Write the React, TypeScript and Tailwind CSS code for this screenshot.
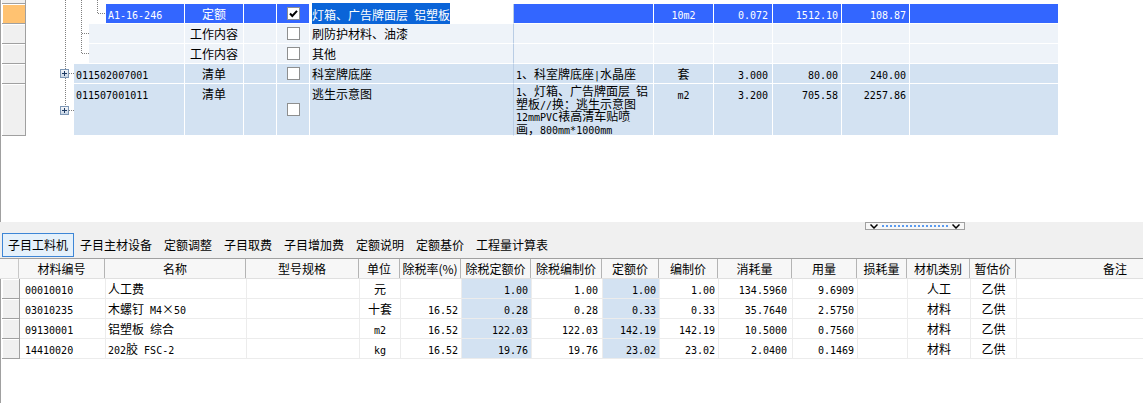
import React from "react";

const cjk = "font-['Noto_Sans_CJK_SC',sans-serif] text-[12px]";
const asc = "font-['DejaVu_Sans_Mono',monospace] text-[10px]";
const CJK_RE = /([\u2E80-\u9FFF\u3000-\u303F\uFF00-\uFFEF×]+)/;

// SimSun-ish look: CJK at 12px, ascii as narrow mono
function Mixed({ s }: { s: string }) {
  const parts = s.split(CJK_RE).filter(Boolean);
  return (
    <>
      {parts.map((p, i) =>
        CJK_RE.test(p) ? (
          <span key={i} className={cjk}>
            {p}
          </span>
        ) : (
          <span key={i} className={asc}>
            {p}
          </span>
        )
      )}
    </>
  );
}

function Checkbox({ checked }: { checked?: boolean }) {
  return (
    <svg width="13" height="13" viewBox="0 0 13 13">
      <rect x="0.5" y="0.5" width="12" height="12" fill="#fff" stroke="#8e8f8f" />
      {checked && <path d="M3 6.5 L5.3 9 L10 3.8" fill="none" stroke="#000" strokeWidth="2" />}
    </svg>
  );
}

type TopRow = {
  indent: number;
  code: string;
  type: string;
  checked?: boolean;
  name: string;
  feat: string[];
  unit: string;
  qty: string;
  price: string;
  total: string;
  kind: "sel" | "sub" | "list";
  tall?: boolean;
};

const topRows: TopRow[] = [
  { indent: 80, code: "A1-16-246", type: "定额", checked: true, name: "灯箱、广告牌面层 铝塑板", feat: [], unit: "10m2", qty: "0.072", price: "1512.10", total: "108.87", kind: "sel" },
  { indent: 63, code: "", type: "工作内容", name: "刷防护材料、油漆", feat: [], unit: "", qty: "", price: "", total: "", kind: "sub" },
  { indent: 63, code: "", type: "工作内容", name: "其他", feat: [], unit: "", qty: "", price: "", total: "", kind: "sub" },
  { indent: 48, code: "011502007001", type: "清单", name: "科室牌底座", feat: ["1、科室牌底座|水晶座"], unit: "套", qty: "3.000", price: "80.00", total: "240.00", kind: "list" },
  {
    indent: 48,
    code: "011507001011",
    type: "清单",
    name: "逃生示意图",
    feat: ["1、灯箱、广告牌面层 铝", "塑板//换：逃生示意图", "12mmPVC裱高清车贴喷", "画，800mm*1000mm"],
    unit: "m2",
    qty: "3.200",
    price: "705.58",
    total: "2257.86",
    kind: "list",
    tall: true,
  },
];

const bg = { sel: "bg-[#3366ff] text-white", sub: "bg-[#eef3f9] text-black", list: "bg-[#d3e2f2] text-black" };

function TopGridRow({ r, first }: { r: TopRow; first?: boolean }) {
  const c = `${bg[r.kind]} border-r border-b border-white leading-[19px] whitespace-nowrap overflow-hidden`;
  return (
    <div className={r.tall ? "flex h-[52px]" : "flex h-[20px]"}>
      <div
        className={`w-[24px] shrink-0 border-r border-b border-[#a0a0a0] shadow-[inset_1px_1px_0_#fff] ${
          first ? "bg-[#ffc271]" : "bg-[#f0f0f0]"
        }`}
      />
      <div className="shrink-0 bg-white" style={{ width: r.indent }} />
      <div className={`${c} shrink-0 pl-[2px]`} style={{ width: 159 - r.indent }}>
        <Mixed s={r.code} />
      </div>
      <div className={`${c} w-[59px] shrink-0 text-center`}>
        <Mixed s={r.type} />
      </div>
      <div className={`${c} w-[33px] shrink-0`} />
      <div className={`${bg[r.kind]} w-[33px] shrink-0 border-r border-b border-white flex items-center justify-center`}>
        <Checkbox checked={r.checked} />
      </div>
      {r.kind === "sel" ? (
        <div className="w-[204px] shrink-0 bg-white border-r border-b border-r-[#b9cde5] border-b-white pl-[2px] pt-[2px] leading-[16px] whitespace-nowrap">
          <span className="bg-[#0a64d8] text-white">
            <Mixed s={r.name} />
          </span>
        </div>
      ) : (
        <div className={`${bg[r.kind]} w-[204px] shrink-0 border-r border-b border-r-[#b9cde5] border-b-white pl-[2px] leading-[19px] whitespace-nowrap`}>
          <Mixed s={r.name} />
        </div>
      )}
      <div className={`${bg[r.kind]} w-[140px] shrink-0 border-r border-b border-white pl-[2px] whitespace-nowrap`}>
        {r.feat.map((l) => (
          <div key={l} className={r.tall ? "h-[12.5px] leading-[13px]" : "h-[19px] leading-[19px]"}>
            <Mixed s={l} />
          </div>
        ))}
      </div>
      <div className={`${c} w-[60px] shrink-0 text-center`}>
        <Mixed s={r.unit} />
      </div>
      <div className={`${c} w-[59px] shrink-0 text-right pr-[4px]`}>
        <Mixed s={r.qty} />
      </div>
      <div className={`${c} w-[69px] shrink-0 text-right pr-[3px]`}>
        <Mixed s={r.price} />
      </div>
      <div className={`${c} w-[68px] shrink-0 text-right pr-[3px]`}>
        <Mixed s={r.total} />
      </div>
      <div className={`${c} w-[149px] shrink-0`} />
    </div>
  );
}

function TreeLines() {
  const dot = { stroke: "#7f7f7f", strokeDasharray: "1 1", strokeWidth: 1 };
  const plus = (y: number) => (
    <g key={y}>
      <rect x="60.5" y={y + 0.5} width="8" height="8" fill="url(#pg)" stroke="#7d97b5" />
      <path d={`M62 ${y + 4.5} H67 M64.5 ${y + 2} V${y + 7}`} stroke="#1d3a63" strokeWidth="1" />
    </g>
  );
  return (
    <svg className="absolute left-0 top-0 pointer-events-none" width="110" height="136">
      <defs>
        <linearGradient id="pg" x1="0" y1="0" x2="0" y2="1">
          <stop offset="0" stopColor="#f7f9fc" />
          <stop offset="1" stopColor="#c5d3e4" />
        </linearGradient>
      </defs>
      <line x1="65.5" y1="0" x2="65.5" y2="69" {...dot} />
      <line x1="65.5" y1="78" x2="65.5" y2="106" {...dot} />
      <line x1="69" y1="73.5" x2="74" y2="73.5" {...dot} />
      <line x1="69" y1="110.5" x2="74" y2="110.5" {...dot} />
      <line x1="81.5" y1="0" x2="81.5" y2="54" {...dot} />
      <line x1="82" y1="33.5" x2="89" y2="33.5" {...dot} />
      <line x1="82" y1="53.5" x2="89" y2="53.5" {...dot} />
      <line x1="97.5" y1="0" x2="97.5" y2="14" {...dot} />
      <line x1="98" y1="13.5" x2="106" y2="13.5" {...dot} />
      {plus(69)}
      {plus(106)}
    </svg>
  );
}

const tabs = ["子目工料机", "子目主材设备", "定额调整", "子目取费", "子目增加费", "定额说明", "定额基价", "工程量计算表"];

const cols = [
  { h: "材料编号", w: 86, a: "text-left pl-[5px]" },
  { h: "名称", w: 141, a: "text-left pl-[2px]" },
  { h: "型号规格", w: 113, a: "text-left" },
  { h: "单位", w: 41, a: "text-center" },
  { h: "除税率(%)", w: 61, a: "text-right pr-[3px]" },
  { h: "除税定额价", w: 70, a: "text-right pr-[3px]", blue: true },
  { h: "除税编制价", w: 71, a: "text-right pr-[4px]" },
  { h: "定额价", w: 57, a: "text-right pr-[3px]", blue: true },
  { h: "编制价", w: 59, a: "text-right pr-[3px]" },
  { h: "消耗量", w: 74, a: "text-right pr-[5px]" },
  { h: "用量", w: 65, a: "text-right pr-[3px]" },
  { h: "损耗量", w: 50, a: "text-right pr-[3px]" },
  { h: "材机类别", w: 63, a: "text-center" },
  { h: "暂估价", w: 46, a: "text-center" },
];

const mats = [
  ["00010010", "人工费", "", "元", "", "1.00", "1.00", "1.00", "1.00", "134.5960", "9.6909", "", "人工", "乙供"],
  ["03010235", "木螺钉 M4×50", "", "十套", "16.52", "0.28", "0.28", "0.33", "0.33", "35.7640", "2.5750", "", "材料", "乙供"],
  ["09130001", "铝塑板 综合", "", "m2", "16.52", "122.03", "122.03", "142.19", "142.19", "10.5000", "0.7560", "", "材料", "乙供"],
  ["14410020", "202胶 FSC-2", "", "kg", "16.52", "19.76", "19.76", "23.02", "23.02", "2.0400", "0.1469", "", "材料", "乙供"],
];

export default function App() {
  return (
    <div className="relative w-[1143px] h-[403px] overflow-hidden bg-white text-black">
      {/* upper grid: 清单 / 定额 tree */}
      <div className="h-[222px] border-l border-[#a0a0a0] pl-[1px]">
        <div className="flex h-[4px]">
          <div className="w-[24px] border-r border-b border-[#a0a0a0] bg-[#f0f0f0]" />
        </div>
        {topRows.map((r, i) => (
          <TopGridRow key={i} r={r} first={i === 0} />
        ))}
      </div>
      <TreeLines />

      {/* splitter + tab strip */}
      <div className="relative h-[36px] bg-[#f0f0f0]">
        <div className="absolute left-[865px] top-0 w-[100px] h-[8px] border border-[#a0a0a0] bg-[#f7f7f7] flex items-center justify-between px-[4px]">
          <svg width="8" height="5" viewBox="0 0 8 5">
            <path d="M0.5 0.5 L4 4 L7.5 0.5" fill="none" stroke="#000" strokeWidth="1.5" />
          </svg>
          <div className="flex-1 mx-[4px] border-t-2 border-dotted border-[#5b9bef]" />
          <svg width="8" height="5" viewBox="0 0 8 5">
            <path d="M0.5 0.5 L4 4 L7.5 0.5" fill="none" stroke="#000" strokeWidth="1.5" />
          </svg>
        </div>
        <div className="flex pt-[11px] pl-[2px] font-['Noto_Sans_CJK_SC',sans-serif] text-[12px]">
          {tabs.map((t, i) => (
            <div
              key={t}
              className={`h-[24px] px-[5px] leading-[22px] border ${
                i === 0 ? "border-[#3d86d6] bg-[#e5f1fb]" : "border-transparent"
              }`}
            >
              {t}
            </div>
          ))}
        </div>
      </div>

      {/* lower grid: 工料机 */}
      <div className="border-t border-[#a0a0a0] font-['Noto_Sans_CJK_SC',sans-serif] text-[12px]">
        <div className="flex h-[20px] bg-[#f7f7f7] border-b border-[#e0e0e0]">
          <div className="w-[19px] shrink-0 border-r border-[#c8c8c8]" />
          {cols.map((c) => (
            <div key={c.h} className="shrink-0 border-r border-[#b4b4b4] text-center leading-[19px]" style={{ width: c.w }}>
              {c.h}
            </div>
          ))}
          <div className="flex-1 leading-[19px] pl-[87px]">备注</div>
        </div>
        <div className="border-l border-[#a0a0a0] h-[200px]">
          {mats.map((m) => (
            <div key={m[0]} className="flex h-[20px]">
              <div className="w-[18px] shrink-0 ml-[1px] bg-[#f0f0f0] border-r border-b border-[#a0a0a0] shadow-[inset_1px_1px_0_#fff]" />
              {cols.map((c, j) => (
                <div
                  key={c.h}
                  className={`shrink-0 border-r border-b border-[#ececec] leading-[19px] whitespace-nowrap overflow-hidden ${c.a} ${
                    c.blue ? "bg-[#d3e2f2]" : ""
                  }`}
                  style={{ width: c.w }}
                >
                  <Mixed s={m[j]} />
                </div>
              ))}
              <div className="flex-1 border-b border-[#ececec]" />
            </div>
          ))}
        </div>
      </div>
    </div>
  );
}
